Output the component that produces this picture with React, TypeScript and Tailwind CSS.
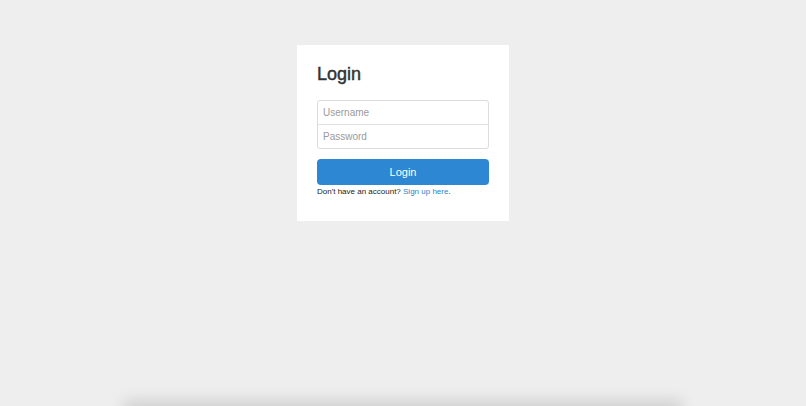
import React from "react";

export default function App() {
  return (
    <div
      className="relative w-full h-[406px] overflow-hidden bg-[#eeeeee]"
      style={{ fontFamily: '"Liberation Sans", Arial, sans-serif' }}
    >
      <div className="flex justify-center pt-[45px]">
        <div className="w-[212px] h-[176px] bg-white px-[20px] pt-[19px]">
          <h1 className="text-[18px] leading-[21px] font-normal text-[#333333] [-webkit-text-stroke:0.45px_#333333]">
            Login
          </h1>
          <div className="mt-[15px] flex flex-col border border-[#dcdcdc] rounded-[3px]">
            <input
              placeholder="Username"
              className="h-[24px] px-[5px] text-[10px] text-[#333] placeholder:text-[#9a9a9a] outline-none border-b border-[#e2e2e2] rounded-t-[3px]"
            />
            <input
              type="password"
              placeholder="Password"
              className="h-[23px] px-[5px] text-[10px] text-[#333] placeholder:text-[#9a9a9a] outline-none rounded-b-[3px]"
            />
          </div>
          <button className="mt-[10px] w-full h-[26px] rounded-[4px] bg-[#2d87d3] text-white text-[11px] leading-[26px]">
            Login
          </button>
          <p className="mt-[1px] text-[8px] leading-[12px] text-[#222222]">
            Don't have an account? <a className="text-[#2b82cb]">Sign up here</a>.
          </p>
        </div>
      </div>
      <div className="absolute left-[130px] right-[130px] top-[406px] h-[40px] bg-[#dddddd] shadow-[0_0_14px_6px_rgba(0,0,0,0.12)]" />
    </div>
  );
}
